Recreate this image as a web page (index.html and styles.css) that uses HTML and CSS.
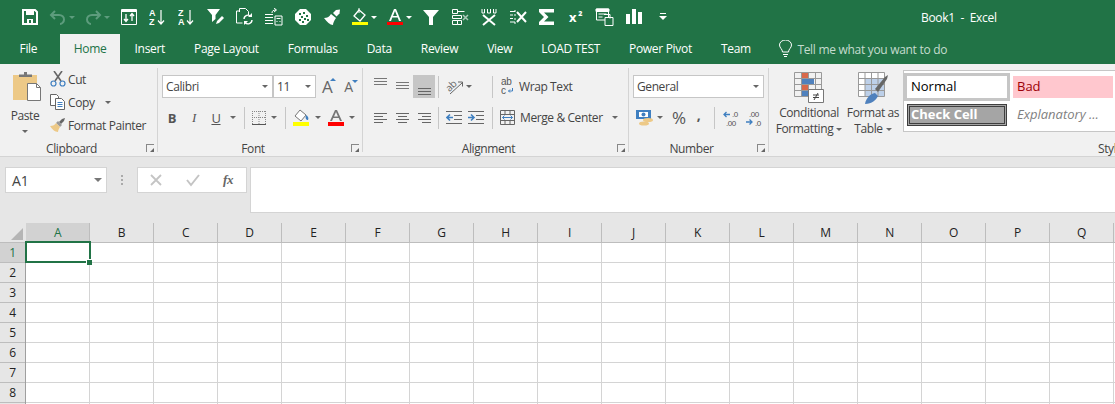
FILE: index.html
```html
<!DOCTYPE html>
<html lang="en">

<head>
    <meta charset="UTF-8">
    <title>Book1 - Excel</title>
    <link rel="stylesheet" href="styles.css">
</head>

<body>

    <div class="titlebar">
        <div class="q"><svg width="16" height="16" viewBox="0 0 16 16"><path d="M1 1h12l2 2v12H1z" fill="none" stroke="#fff" stroke-width="2"/><path d="M4 1h8v5H4zM5 10h6v5H5z" fill="#fff"/><path d="M7 11h2v3H7z" fill="#217346"/></svg></div>
        <div class="q q-drop dim"><svg width="18" height="16" viewBox="0 0 18 16"><path d="M6 2L2 6l4 4M2 6h8c3 0 5 2 5 4.500S13 15 11 15" fill="none" stroke="#5d9c7d" stroke-width="2"/></svg><i class="caret dimcaret"></i></div>
        <div class="q q-drop dim"><svg width="18" height="16" viewBox="0 0 18 16"><path d="M12 2l4 4-4 4M16 6H8c-3 0-5 2-5 4.500S5 15 7 15" fill="none" stroke="#5d9c7d" stroke-width="2"/></svg><i class="caret dimcaret"></i></div>
        <div class="q"><svg width="16" height="16" viewBox="0 0 16 16"><path d="M.5.5h15v15H.5z" fill="none" stroke="#fff"/><path d="M1 1h14v2H1z" fill="#fff"/><path d="M5 5v7M3 10l2 2.500L7 10M11 12V5M9 7l2-2.500L13 7" fill="none" stroke="#fff" stroke-width="1.300"/></svg></div>
        <div class="q"><svg width="18" height="24" viewBox="0 0 18 24"><text x="0" y="11" class="qt">A</text><text x="0" y="20" class="qt">Z</text><path d="M12 5v14M9 15.500l3 3.500 3-3.500" fill="none" stroke="#fff" stroke-width="1.200"/></svg></div>
        <div class="q"><svg width="18" height="24" viewBox="0 0 18 24"><text x="0" y="11" class="qt">Z</text><text x="0" y="20" class="qt">A</text><path d="M12 5v14M9 15.500l3 3.500 3-3.500" fill="none" stroke="#fff" stroke-width="1.200"/></svg></div>
        <div class="q"><svg width="18" height="18" viewBox="0 0 18 18"><path d="M0 1h13L8.500 7v4L5 14V7z" fill="#fff"/><path d="M9 16l1-3 5-5 2 2-5 5z" fill="#fff"/></svg></div>
        <div class="q"><svg width="18" height="18" viewBox="0 0 18 18"><path d="M3.500 4V.5h6l3 3V7M3.500 3H.5v12h6" fill="none" stroke="#fff"/><path d="M8 11a4 4 0 0 1 7-2.500M16 12a4 4 0 0 1-7 2.500" fill="none" stroke="#fff" stroke-width="1.400"/><path d="M16 5v4h-4zM8 17v-4h4z" fill="#fff"/></svg></div>
        <div class="q"><svg width="18" height="18" viewBox="0 0 18 18"><path d="M0 6.500h8M0 9.500h8M0 12.500h8M0 15.500h8" stroke="#fff"/><path d="M10 8h7v9h-7z" fill="none" stroke="#fff"/><path d="M11.500 10h4v1h-4zM11.500 13h1v1h-1zM14.500 13h1v1h-1z" fill="#fff"/><path d="M7 5c0-2 1-3 4-3M9 0l2.500 2L9 4" fill="none" stroke="#fff"/></svg></div>
        <div class="q"><svg width="16" height="16" viewBox="0 0 16 16"><path d="M5 0h6l5 5v6l-5 5H5l-5-5V5z" fill="#fff"/><path d="M4 4h2v2H4zM8 3h2v2H8zM11 6h2v2h-2zM6 7h2v2H6zM9 9h2v2H9zM4 10h2v2H4zM7 12h2v2H7zM12 10h2v2h-2z" fill="#217346"/></svg></div>
        <div class="q"><svg width="18" height="16" viewBox="0 0 18 16"><path d="M10 4l3-3 4-.5-.5 4-3 3z" fill="#fff"/><path d="M1 9c3 0 5-1 7-4l5 4c-2 3-3 5-3 7-3 0-6-3-9-7z" fill="#fff"/></svg></div>
        <div class="q q-drop"><svg width="18" height="18" viewBox="0 0 18 18"><path d="M3 8l5-6 6 5-5 6z" fill="none" stroke="#fff" stroke-width="1.300"/><path d="M8 0v5" stroke="#fff"/><path d="M1 14h16v3H1z" fill="#ff0"/></svg><i class="caret"></i></div>
        <div class="q q-drop"><svg width="18" height="18" viewBox="0 0 18 18"><path d="M3 13L8 1h2l5 12h-2l-1.300-3.500H6.300L5 13zM7 8h4L9 3z" fill="#fff" fill-rule="evenodd"/><path d="M1 14h16v3H1z" fill="#f00"/></svg><i class="caret"></i></div>
        <div class="q"><svg width="16" height="16" viewBox="0 0 16 16"><path d="M0 1h16l-6 7v8H6V8z" fill="#fff"/></svg></div>
        <div class="q"><svg width="18" height="18" viewBox="0 0 18 18"><path d="M1.500 1.500h5v4h-5zM1.500 7.500h9v3h-9zM1.500 12.500h5v4h-5zM6.500 12.500h4v4h-4z" fill="none" stroke="#fff"/><path d="M6.500 3.500h7" stroke="#fff"/><path d="M12 7l5 5M17 7l-5 5" stroke="#a9c9b8" stroke-width="1.500"/></svg></div>
        <div class="q"><svg width="16" height="18" viewBox="0 0 16 18"><path d="M1 1v4h2.500V1M6.500 1v4h3V1M12.500 1v4H15V1" fill="none" stroke="#fff"/><path d="M2 7l12 10M14 7L2 17" stroke="#fff" stroke-width="2"/></svg></div>
        <div class="q"><svg width="18" height="16" viewBox="0 0 18 16"><path d="M1 2.500h5M1 6h3M1 9.500h3M1 13h5" stroke="#fff"/><path d="M6 1v14" stroke="#fff" stroke-dasharray="2 2"/><path d="M8 3l9 10M17 3L8 13" stroke="#fff" stroke-width="2"/></svg></div>
        <div class="q"><svg width="16" height="16" viewBox="0 0 16 16"><path d="M0 0h15v3.500H5L9.500 8 5 12.500h10V16H0v-3l5-5-5-5z" fill="#fff"/></svg></div>
        <div class="q"><span class="sup">x<b>2</b></span></div>
        <div class="q"><svg width="20" height="18" viewBox="0 0 20 18"><path d="M1.500 1h12v11h-12z" fill="none" stroke="#fff"/><path d="M1 1h13v2.500H1zM3.500 6h8M3.500 9h4" stroke="#fff" fill="#fff"/><path d="M10 9.500h8v8h-8z" fill="#217346" stroke="#fff"/><path d="M9 6.500h6v4" fill="none" stroke="#fff"/></svg></div>
        <div class="q"><svg width="16" height="16" viewBox="0 0 16 16"><path d="M0 5h4v10H0zM6 0h4v15H6zM12 3h4v12h-4z" fill="#fff"/></svg></div>
        <div class="q"><svg width="8" height="8" viewBox="0 0 8 8"><path d="M1 0h6v1H1z" fill="#fff"/><path d="M0 3h8L4 7z" fill="#fff"/></svg></div>
        <div class="doc-title">Book1&nbsp; -&nbsp; Excel</div>
    </div>

    <div class="tabs">
        <div class="tab tab-file">File</div>
        <div class="tab tab-on">Home</div>
        <div class="tab">Insert</div>
        <div class="tab">Page Layout</div>
        <div class="tab">Formulas</div>
        <div class="tab">Data</div>
        <div class="tab">Review</div>
        <div class="tab">View</div>
        <div class="tab">LOAD TEST</div>
        <div class="tab">Power Pivot</div>
        <div class="tab">Team</div>
        <div class="tell">
            <svg width="13" height="18" viewBox="0 0 13 18"><path d="M3.500 12c0-3-3-4-3-7a6 5 0 0 1 12 0c0 3-3 4-3 7zM4 14.500h5M5 16.500h3" fill="none" stroke="#fff"/></svg>
            <span>Tell me what you want to do</span>
        </div>
    </div>

    <div class="ribbon">

        <div class="group g-clip">
            <div class="body clip-body">
                <div class="paste">
                    <svg width="30" height="36" viewBox="0 0 30 36"><path d="M0 4h24v25H0z" fill="#edc987"/><path d="M6 6V3.500h5V1h3v2.500h5V6z" fill="#777"/><path d="M14.500 12.500h9l4 4v13h-13z" fill="#fff" stroke="#777"/><path d="M23.500 12.500v4h4" fill="none" stroke="#777"/></svg>
                    <span class="paste-label">Paste</span>
                    <i class="caret dark"></i>
                </div>
                <div class="clip-list">
                    <div class="small"><svg width="16" height="16" viewBox="0 0 16 16"><path d="M4 0l7 10M12 0L5 10" stroke="#666" stroke-width="1.600"/><circle cx="3.500" cy="12.500" r="2.500" fill="none" stroke="#3f7fc0" stroke-width="1.200"/><circle cx="12.500" cy="12.500" r="2.500" fill="none" stroke="#3f7fc0" stroke-width="1.200"/></svg><span>Cut</span></div>
                    <div class="small"><svg width="16" height="16" viewBox="0 0 16 16"><path d="M.5.5h6l2 2v9h-8z" fill="#fff" stroke="#666"/><path d="M5.500 4.500h6l3 3v8h-9z" fill="#fff" stroke="#666"/><path d="M7.500 8.500h5M7.500 10.500h5M7.500 12.500h5" stroke="#3f7fc0"/></svg><span>Copy</span><i class="caret dark copy-caret"></i></div>
                    <div class="small"><svg width="16" height="16" viewBox="0 0 16 16"><path d="M9 5l3-3 3-1-1 3-3 3z" fill="#666"/><path d="M8 4l4 4-2 2-4-4z" fill="#999"/><path d="M0 9c3 0 5-1 6-3l4 4c-1 2-2 3-2 5-3 0-6-3-8-6z" fill="#edc987"/></svg><span>Format Painter</span></div>
                </div>
            </div>
            <div class="label">Clipboard</div>
            <i class="launcher"></i>
        </div>

        <div class="group g-font">
            <div class="body two-rows">
                <div class="row">
                    <div class="combo combo-font">Calibri<i class="caret dark"></i></div>
                    <div class="combo combo-size">11<i class="caret dark"></i></div>
                    <div class="grow">A<i class="tri-up"></i></div>
                    <div class="shrink">A<i class="tri-down"></i></div>
                </div>
                <div class="row font-row">
                    <b class="fmt fmt-b">B</b>
                    <i class="fmt fmt-i">I</i>
                    <u class="fmt fmt-u">U</u>
                    <i class="caret dark u-caret"></i>
                    <i class="sep sep-a"></i>
                    <svg class="border-ic" width="14" height="14" viewBox="0 0 14 14"><path d="M.5 0v13M7 0v13M13.500 0v13M0 .5h14M0 6.500h14" stroke="#888" stroke-dasharray="1 1"/><path d="M0 13.500h14" stroke="#555"/></svg>
                    <i class="caret dark"></i>
                    <i class="sep sep-b"></i>
                    <svg width="17" height="17" viewBox="0 0 17 17"><path d="M2 7l5-6 6 5-5 6z" fill="#fff" stroke="#777"/><path d="M13 6c2 1 3 3 2 5-2 0-3-2-2-5z" fill="#3f7fc0"/><path d="M0 13h16v4H0z" fill="#ff0"/></svg>
                    <i class="caret dark"></i>
                    <svg class="color-a" width="16" height="17" viewBox="0 0 16 17"><path d="M2 12L7 1h2l5 11h-2l-1.300-3H5.300L4 12zM6 7.500h4L8 3z" fill="#777" fill-rule="evenodd"/><path d="M0 13h16v4H0z" fill="#f00"/></svg>
                    <i class="caret dark"></i>
                </div>
            </div>
            <div class="label">Font</div>
            <i class="launcher"></i>
        </div>

        <div class="group g-align">
            <div class="body two-rows">
                <div class="row">
                    <div class="al"><svg width="15" height="23" viewBox="0 0 15 23"><path d="M1 3.500h13M1 6.500h13M1 9.500h13" stroke="#777"/></svg></div>
                    <div class="al"><svg width="15" height="23" viewBox="0 0 15 23"><path d="M1 7.500h13M1 10.500h13M1 13.500h13" stroke="#777"/></svg></div>
                    <div class="al al-on"><svg width="15" height="23" viewBox="0 0 15 23"><path d="M1 13.500h13M1 16.500h13M1 19.500h13" stroke="#666"/></svg></div>
                    <i class="sep sep-c"></i>
                    <svg class="orient" width="20" height="22" viewBox="0 0 20 22"><text x="2" y="14" class="ot" transform="rotate(-45 6 12)">ab</text><path d="M5 18L17 7M13 6h4.500v4.500" fill="none" stroke="#666"/></svg>
                    <i class="caret dark"></i>
                    <i class="sep sep-d"></i>
                    <svg class="wrap-ic" width="13" height="23" viewBox="0 0 13 23"><text x="0" y="10" class="wt">ab</text><text x="0" y="19" class="wt">c</text><path d="M11.500 13v3h-4M9 14.500L7.500 16 9 17.500" fill="none" stroke="#3f7fc0"/></svg>
                    <span class="wide-text">Wrap Text</span>
                </div>
                <div class="row">
                    <div class="al"><svg width="15" height="12" viewBox="0 0 15 12"><path d="M1 1.500h13M1 4.500h9M1 7.500h13M1 10.500h9" stroke="#666"/></svg></div>
                    <div class="al"><svg width="15" height="12" viewBox="0 0 15 12"><path d="M1 1.500h13M3 4.500h9M1 7.500h13M3 10.500h9" stroke="#666"/></svg></div>
                    <div class="al"><svg width="15" height="12" viewBox="0 0 15 12"><path d="M1 1.500h13M5 4.500h9M1 7.500h13M5 10.500h9" stroke="#666"/></svg></div>
                    <i class="sep sep-c"></i>
                    <svg class="indent" width="16" height="14" viewBox="0 0 16 14"><path d="M0 .5h16M8 4.500h8M8 8.500h8M0 12.500h16" stroke="#666"/><path d="M7 6.500H1M4 3.500l-3 3 3 3" fill="none" stroke="#3f7fc0" stroke-width="1.600"/></svg>
                    <svg class="indent" width="16" height="14" viewBox="0 0 16 14"><path d="M0 .5h16M8 4.500h8M8 8.500h8M0 12.500h16" stroke="#666"/><path d="M0 6.500h6M3 3.500l3 3-3 3" fill="none" stroke="#3f7fc0" stroke-width="1.600"/></svg>
                    <i class="sep sep-e"></i>
                    <svg class="merge-ic" width="15" height="15" viewBox="0 0 15 15"><path d="M.5.500h14v14H.5zM.5 4.500h14M.5 10.500h14M5 .5v4M10 .5v4M5 10.500v4M10 10.500v4" fill="none" stroke="#666"/><path d="M2.500 7.500h10M4.500 5.500l-2 2 2 2M10.500 5.500l2 2-2 2" fill="none" stroke="#3f7fc0"/></svg>
                    <span class="wide-text">Merge &amp; Center</span>
                    <i class="caret dark merge-caret"></i>
                </div>
            </div>
            <div class="label">Alignment</div>
            <i class="launcher"></i>
        </div>

        <div class="group g-num">
            <div class="body two-rows">
                <div class="row">
                    <div class="combo combo-num">General<i class="caret dark"></i></div>
                </div>
                <div class="row">
                    <svg class="acct" width="18" height="16" viewBox="0 0 18 16"><path d="M0 0h15v9H0z" fill="#3f7fc0"/><path d="M3 2h9v5H3z" fill="#fff"/><circle cx="7.500" cy="4.500" r="2" fill="#3f7fc0"/><ellipse cx="12" cy="10" rx="5" ry="2" fill="#edc987"/><ellipse cx="8" cy="13.500" rx="5" ry="2" fill="#edc987"/></svg>
                    <i class="caret dark"></i>
                    <span class="pct">%</span>
                    <span class="comma">,</span>
                    <i class="sep sep-f"></i>
                    <svg class="dec" width="16" height="20" viewBox="0 0 16 20"><path d="M7 6.500H1M3.500 4L1 6.500 3.500 9" fill="none" stroke="#3f7fc0" stroke-width="1.300"/><text x="9" y="9" class="dt">.0</text><text x="3" y="17.500" class="dt">.00</text></svg>
                    <svg class="dec" width="16" height="20" viewBox="0 0 16 20"><text x="3" y="9" class="dt">.00</text><path d="M0 14h6M3.500 11.500L6 14l-2.500 2.500" fill="none" stroke="#3f7fc0" stroke-width="1.300"/><text x="9" y="17.500" class="dt">.0</text></svg>
                </div>
            </div>
            <div class="label">Number</div>
            <i class="launcher"></i>
        </div>

        <div class="group g-styles">
            <div class="body styles-body">
                <div class="big big-cf">
                    <svg width="31" height="33" viewBox="0 0 31 33"><path d="M.5.500h27v24H.5zM.5 6.500h27M.5 12.500h27M.5 18.500h27M7.500.5v24M14.500.5v24M21.500.5v24" fill="none" stroke="#999"/><path d="M8 1h6v5H8zM8 13h6v5H8z" fill="#d9694a"/><path d="M8 7h12v5H8zM8 19h6v5H8z" fill="#4f81bd"/><path d="M14.500 17.500h15v13h-15z" fill="#fff" stroke="#777"/><path d="M19 23h6M19 25.500h6M24 21l-4 7" fill="none" stroke="#444"/></svg>
                    <span>Conditional</span>
                    <span>Formatting<i class="caret dark"></i></span>
                </div>
                <div class="big big-ft">
                    <svg width="30" height="33" viewBox="0 0 30 33"><path d="M.5.500h26v24H.5z" fill="#fff" stroke="#999"/><path d="M7 7h19v17H7z" fill="#bdd0e9"/><path d="M.5 6.500h26M.5 12.500h26M.5 18.500h26M7 .5v24M13.500.5v24M20 .5v24" stroke="#999"/><path d="M17 17L27 5l3-2-1 4-9 13z" fill="#666"/><path d="M7 32c1-6 5-10 10-11l3 3c-2 4-6 8-13 8z" fill="#4f81bd"/></svg>
                    <span>Format as</span>
                    <span>Table<i class="caret dark"></i></span>
                </div>
                <div class="gallery">
                    <div class="cell-style st-normal">Normal</div>
                    <div class="cell-style st-bad">Bad</div>
                    <div class="cell-style st-check">Check Cell</div>
                    <div class="cell-style st-expl">Explanatory ...</div>
                </div>
            </div>
            <div class="label label-styles">Styles</div>
        </div>

    </div>

    <div class="formula-bar">
        <div class="name-box">A1<i class="caret name-caret"></i></div>
        <div class="grip"></div>
        <div class="fx-box">
            <svg width="14" height="14" viewBox="0 0 14 14"><path d="M2 2l10 10M12 2L2 12" stroke="#c4c4c4" stroke-width="1.800"/></svg>
            <svg width="16" height="14" viewBox="0 0 16 14"><path d="M2 7l4 5 8-10" fill="none" stroke="#c4c4c4" stroke-width="2"/></svg>
            <span class="fx">fx</span>
        </div>
        <div class="formula-input"></div>
    </div>

    <div class="sheet">
        <div class="col-heads">
            <div class="corner"><i></i></div>
            <div class="col col-on">A</div>
            <div class="col">B</div>
            <div class="col">C</div>
            <div class="col">D</div>
            <div class="col">E</div>
            <div class="col">F</div>
            <div class="col">G</div>
            <div class="col">H</div>
            <div class="col">I</div>
            <div class="col">J</div>
            <div class="col">K</div>
            <div class="col">L</div>
            <div class="col">M</div>
            <div class="col">N</div>
            <div class="col">O</div>
            <div class="col">P</div>
            <div class="col">Q</div>
        </div>
        <div class="sheet-main">
            <div class="row-heads">
                <div class="rh rh-on">1</div>
                <div class="rh">2</div>
                <div class="rh">3</div>
                <div class="rh">4</div>
                <div class="rh">5</div>
                <div class="rh">6</div>
                <div class="rh">7</div>
                <div class="rh">8</div>
            </div>
            <div class="cells">
                <div class="active-cell"><i></i></div>
            </div>
        </div>
    </div>

</body>

</html>
```

FILE: styles.css
```css
html,
body {
    margin: 0;
    height: 404px;
    overflow: hidden;
}

body {
    font-family: 'Open Sans', 'Noto Sans', sans-serif;
    font-size: 12px;
    letter-spacing: -0.4px;
    color: #444;
    background: #fff;
}

svg {
    display: block;
    flex: none;
}

/* little dropdown arrow used everywhere */
.caret {
    display: inline-block;
    width: 0;
    height: 0;
    border-left: 3px solid transparent;
    border-right: 3px solid transparent;
    border-top: 3px solid #fff;
    flex: none;
}

.caret.dark {
    border-top-color: #666;
}

.caret.dimcaret {
    border-top-color: #5d9c7d;
}

/* title bar */
.titlebar {
    height: 34px;
    background: #217346;
    color: #fff;
    display: flex;
    align-items: center;
    padding-left: 15px;
    letter-spacing: -0.3px;
}

.q {
    width: 29px;
    height: 34px;
    display: flex;
    align-items: center;
    justify-content: center;
    flex: none;
}

.q-drop {
    width: 35px;
    gap: 2px;
}

.qt {
    font: bold 9px 'Liberation Sans', sans-serif;
    fill: #fff;
}

.sup {
    font-weight: 700;
    font-size: 13px;
    line-height: 1;
}

.sup b {
    font-size: 7px;
    vertical-align: 6px;
    margin-left: 2px;
}

.doc-title {
    margin-left: 244px;
    white-space: nowrap;
}

/* tabs */
.tabs {
    height: 30px;
    background: #217346;
    color: #fff;
    display: flex;
    padding-left: 5px;
    letter-spacing: -0.3px;
}

.tab {
    padding: 0 14.500px;
    line-height: 30px;
    white-space: nowrap;
}

.tab-file {
    padding-right: 23px;
}

.tab-on {
    background: #f1f1f1;
    color: #217346;
    padding: 0 13.500px;
}

.tell {
    display: flex;
    align-items: center;
    margin-left: 14px;
    gap: 5px;
    color: #c5dccf;
}

/* ribbon */
.ribbon {
    height: 92px;
    display: flex;
    background: #f1f1f1;
    border-bottom: 1px solid #d4d4d4;
    overflow: hidden;
}

.group {
    position: relative;
    display: flex;
    flex-direction: column;
    flex: none;
}

.group::after {
    content: "";
    position: absolute;
    top: 4px;
    bottom: 4px;
    right: 0;
    width: 1px;
    background: #d4d4d4;
}

.g-clip {
    width: 158px;
}

.g-font {
    width: 205px;
}

.g-align {
    width: 266px;
}

.g-num {
    width: 140px;
}

.g-styles {
    flex: 1;
}

.g-styles::after {
    display: none;
}

.body {
    height: 76px;
}

.label {
    height: 16px;
    line-height: 18px;
    padding-right: 15px;
    text-align: center;
    color: #444;
}

.label-styles {
    text-align: left;
    padding: 0 0 0 329px;
}

.launcher {
    position: absolute;
    right: 4px;
    bottom: 4px;
    width: 7px;
    height: 7px;
    border-left: 1px solid #888;
    border-top: 1px solid #888;
}

.launcher::after {
    content: "";
    position: absolute;
    right: 0;
    bottom: 0;
    width: 0;
    height: 0;
    border-left: 4px solid transparent;
    border-bottom: 4px solid #666;
}

.two-rows {
    padding-top: 11px;
    height: 65px;
    display: flex;
    flex-direction: column;
    gap: 8px;
}

.row {
    display: flex;
    align-items: center;
    height: 23px;
    flex: none;
}

.sep {
    width: 1px;
    height: 22px;
    background: #c6c6c6;
    flex: none;
}

/* clipboard */
.clip-body {
    display: flex;
    padding-top: 4px;
    height: 72px;
}

.paste {
    width: 47px;
    display: flex;
    flex-direction: column;
    align-items: center;
    padding-left: 3px;
    box-sizing: border-box;
}

.paste svg {
    margin: 3px 0 0 5px;
}

.paste-label {
    line-height: 17px;
}

.paste .caret {
    margin-top: 6px;
}

.clip-list {
    margin-left: 3px;
    display: flex;
    flex-direction: column;
    gap: 1px;
}

.small {
    height: 22px;
    display: flex;
    align-items: center;
    gap: 2px;
    white-space: nowrap;
}

.copy-caret {
    margin-left: 8px;
}

/* font */
.combo {
    box-sizing: border-box;
    height: 23px;
    background: #fff;
    border: 1px solid #c6c6c6;
    display: flex;
    align-items: center;
    justify-content: space-between;
    padding: 0 4px 0 3px;
    color: #444;
}

.combo-font {
    width: 111px;
    margin-left: 4px;
}

.combo-size {
    width: 43px;
}

.grow,
.shrink {
    position: relative;
    color: #666;
    line-height: 1;
}

.grow {
    font-size: 17px;
    margin-left: 6px;
}

.shrink {
    font-size: 14px;
    margin-left: 12px;
}

.tri-up,
.tri-down {
    position: absolute;
    top: 0;
    left: 8px;
    width: 0;
    height: 0;
    border-left: 3px solid transparent;
    border-right: 3px solid transparent;
}

.tri-up {
    border-bottom: 3px solid #3f7fc0;
}

.tri-down {
    border-top: 3px solid #3f7fc0;
}

.font-row .caret {
    margin-left: 5px;
}

.font-row .u-caret {
    margin-left: 3px;
}

.fmt {
    width: 22px;
    text-align: center;
    color: #555;
    font-size: 13px;
    flex: none;
}

.fmt-b {
    margin-left: 3px;
}

.fmt-i {
    font-family: 'Liberation Serif', serif;
}

.sep-a,
.sep-b {
    margin-left: 8px;
    margin-right: 7px;
}

.color-a {
    margin-left: 7px;
}

/* alignment */
.al {
    width: 22px;
    height: 23px;
    display: flex;
    align-items: center;
    justify-content: center;
    flex: none;
}

.al-on {
    background: #c6c6c6;
}

.g-align .row {
    padding-left: 6px;
}

.sep-c {
    margin-left: 3px;
    margin-right: 6px;
}

.orient {
    margin-right: 1px;
}

.ot {
    font-size: 10px;
    fill: #666;
}

.sep-d {
    margin-left: 20px;
    margin-right: 8px;
}

.wt {
    font: 10px 'Liberation Sans', sans-serif;
    fill: #555;
}

.wide-text {
    margin-left: 5px;
    white-space: nowrap;
}

.indent {
    margin-right: 6px;
}

.indent:first-of-type {
    margin-left: 1px;
}

.sep-e {
    margin-left: 2px;
    margin-right: 7px;
}

.merge-caret {
    margin-left: 9px;
}

/* number */
.combo-num {
    width: 131px;
    margin-left: 4px;
}

.g-num .row:last-child {
    padding-left: 7px;
}

.g-num .caret {
    margin-left: 3px;
}

.pct {
    font-size: 17px;
    margin-left: 9px;
    color: #555;
}

.comma {
    font-weight: 700;
    font-size: 14px;
    margin-left: 11px;
    margin-top: -6px;
    color: #555;
}

.sep-f {
    margin-left: 14px;
    margin-right: 8px;
}

.dec {
    margin-right: 7px;
}

.dt {
    font: 8px 'Liberation Sans', sans-serif;
    fill: #555;
}

/* styles */
.styles-body {
    display: flex;
    height: 76px;
}

.big {
    display: flex;
    flex-direction: column;
    align-items: center;
    line-height: 16px;
    white-space: nowrap;
}

.big svg {
    margin-top: 8px;
}

.big .caret {
    margin-left: 3px;
    vertical-align: 2px;
}

.big-cf {
    width: 76px;
    margin-left: 2px;
}

.big-ft {
    width: 52px;
}

.gallery {
    box-sizing: border-box;
    margin: 6px 0 0 4px;
    width: 240px;
    height: 62px;
    background: #fff;
    border: 1px solid #c6c6c6;
    display: grid;
    grid-template-columns: 106px 106px;
    grid-template-rows: 30px 30px;
    font-size: 13px;
    letter-spacing: 0;
}

.cell-style {
    box-sizing: border-box;
    display: flex;
    align-items: center;
    white-space: nowrap;
}

.st-normal {
    border: 3px solid #c6c6c6;
    color: #000;
    background: #fff;
    margin: 2px 0 0 0;
    height: 28px;
    padding: 0 0 2px 4px;
}

.st-bad {
    background: #ffc7ce;
    color: #9c0006;
    margin: 5px 0 0 3px;
    width: 100px;
    height: 22px;
    padding: 0 0 2px 4px;
}

.st-check {
    background: #a5a5a5;
    color: #fff;
    font-weight: 700;
    border: 3px double #3f3f3f;
    margin: 3px 0 0 3px;
    width: 100px;
    height: 22px;
    padding: 0 0 2px 1px;
}

.st-expl {
    color: #7f7f7f;
    font-style: italic;
    margin: 3px 0 0 7px;
    height: 22px;
    padding-bottom: 2px;
}

/* formula bar */
.formula-bar {
    height: 56px;
    background: #e6e6e6;
    display: flex;
    align-items: flex-start;
    padding: 10px 0 0 5px;
}

.name-box {
    box-sizing: border-box;
    width: 102px;
    height: 26px;
    background: #fff;
    border: 1px solid #d4d4d4;
    display: flex;
    align-items: center;
    justify-content: space-between;
    padding: 0 4px 0 6px;
    font-size: 14px;
    letter-spacing: 0;
}

.name-caret {
    border-left-width: 4px;
    border-right-width: 4px;
    border-top: 4px solid #777;
}

.grip {
    width: 2px;
    height: 10px;
    margin: 8px 14px 0 14px;
    background: repeating-linear-gradient(#aaa 0 2px, transparent 2px 4px);
}

.fx-box {
    box-sizing: border-box;
    width: 110px;
    height: 26px;
    background: #fff;
    border: 1px solid #d4d4d4;
    display: flex;
    align-items: center;
    justify-content: space-between;
    padding: 0 13px 0 11px;
}

.fx {
    font: italic bold 13px 'Liberation Serif', serif;
    color: #666;
}

.formula-input {
    margin-left: 3px;
    flex: 1;
    height: 46px;
    box-sizing: border-box;
    background: #fff;
    border: 1px solid #d4d4d4;
    border-right: none;
}

/* sheet */
.sheet {
    height: 181px;
    overflow: hidden;
}

.col-heads {
    display: flex;
    height: 20px;
    background: #e6e6e6;
    box-sizing: border-box;
    border-bottom: 1px solid #bdbdbd;
}

.corner {
    position: relative;
    width: 26px;
    flex: none;
}

.corner i {
    position: absolute;
    right: 3px;
    bottom: 2px;
    width: 0;
    height: 0;
    border-left: 12px solid transparent;
    border-bottom: 12px solid #b5b5b5;
}

.col {
    box-sizing: border-box;
    width: 64px;
    flex: none;
    text-align: center;
    line-height: 19px;
    color: #222;
    border-right: 1px solid #bdbdbd;
}

.col-on {
    background: #d2d2d2;
    color: #217346;
}

.sheet-main {
    display: flex;
    height: 161px;
}

.row-heads {
    width: 26px;
    box-sizing: border-box;
    flex: none;
    background: #e6e6e6;
    border-right: 1px solid #9f9f9f;
}

.rh {
    box-sizing: border-box;
    height: 20px;
    line-height: 19px;
    text-align: center;
    color: #222;
    border-bottom: 1px solid #bdbdbd;
}

.rh-on {
    background: #d2d2d2;
    color: #217346;
}

.cells {
    position: relative;
    flex: 1;
    background-image:
        linear-gradient(to right, transparent 63px, #d4d4d4 63px),
        linear-gradient(to bottom, transparent 19px, #d4d4d4 19px);
    background-size: 64px 20px;
}

.active-cell {
    position: absolute;
    left: -1px;
    top: -2px;
    width: 66px;
    height: 22px;
    box-sizing: border-box;
    border: 2px solid #217346;
}

.active-cell i {
    position: absolute;
    right: -3px;
    bottom: -4px;
    width: 5px;
    height: 5px;
    background: #217346;
    border: 1px solid #fff;
    border-width: 1px 0 0 1px;
}
```
